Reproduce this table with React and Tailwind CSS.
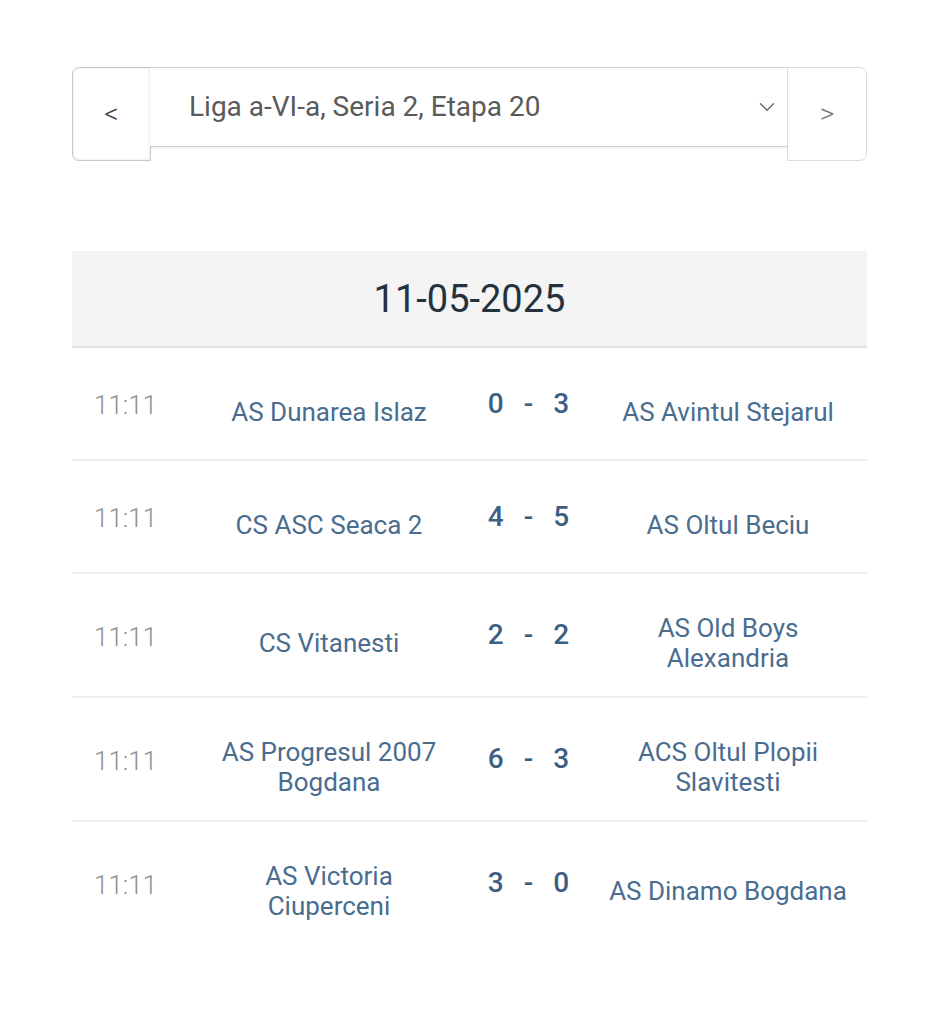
import { ChevronDown } from "lucide-react";

const matches = [
  { time: "11:11", home: "AS Dunarea Islaz", score: [0, 3], away: "AS Avintul Stejarul" },
  { time: "11:11", home: "CS ASC Seaca 2", score: [4, 5], away: "AS Oltul Beciu" },
  { time: "11:11", home: "CS Vitanesti", score: [2, 2], away: "AS Old Boys Alexandria" },
  { time: "11:11", home: "AS Progresul 2007 Bogdana", score: [6, 3], away: "ACS Oltul Plopii Slavitesti" },
  { time: "11:11", home: "AS Victoria Ciuperceni", score: [3, 0], away: "AS Dinamo Bogdana" },
];

export default function App() {
  return (
    <div className="min-h-screen bg-white font-['Roboto',sans-serif]">
      <div className="ml-[72px] w-[795px] pt-[67px]">
        {/* Round picker */}
        <div className="flex items-start">
          <button className="w-[79px] h-[94px] flex items-center justify-center rounded-l-[7px] border border-[#c9c9c9] bg-white text-[28px] font-light text-[#444] shadow-[inset_0_0_3px_rgba(0,0,0,0.12)]">
            &lt;
          </button>
          <div className="flex-1 h-[80px] flex items-center border-y border-[#cfcfcf] bg-white pl-[39px] pr-[8px] -ml-px shadow-[0_1px_2px_rgba(0,0,0,0.08)]">
            <span className="flex-1 text-[28px] text-[#5a5a5a]">Liga a-VI-a, Seria 2, Etapa 20</span>
            <ChevronDown size={26} strokeWidth={1.2} className="text-[#666]" />
          </div>
          <button className="w-[80px] h-[94px] flex items-center justify-center rounded-r-[7px] border border-[#dcdcdc] bg-white text-[28px] font-light text-[#777] -ml-px">
            &gt;
          </button>
        </div>

        {/* Date header */}
        <div className="mt-[90px] h-[97px] flex items-center justify-center bg-[#f4f4f4] border-b-2 border-[#e2e2e2]">
          <span className="text-[38px] text-[#25323d] pt-[2px]">11-05-2025</span>
        </div>

        {/* Matches */}
        <div>
          {matches.map((m, i) => (
            <div
              key={i}
              className={`grid grid-cols-[132px_250px_149px_250px] items-center min-h-[113px] py-[23px] ${i < matches.length - 1 ? "border-b-2 border-[#eeeeee]" : ""}`}
            >
              <div className="pl-[22px] pt-1 text-[26px] font-light text-[#8f8f8f]">{m.time}</div>
              <div className="pt-4 text-center text-[26px] leading-[30px] text-[#4a6d8f]">{m.home}</div>
              <div className="flex justify-center gap-[20px] text-[28px] font-medium text-[#3d5f82]">
                <span>{m.score[0]}</span>
                <span>-</span>
                <span>{m.score[1]}</span>
              </div>
              <div className="pt-4 text-center text-[26px] leading-[30px] text-[#4a6d8f]">{m.away}</div>
            </div>
          ))}
        </div>
      </div>
    </div>
  );
}
